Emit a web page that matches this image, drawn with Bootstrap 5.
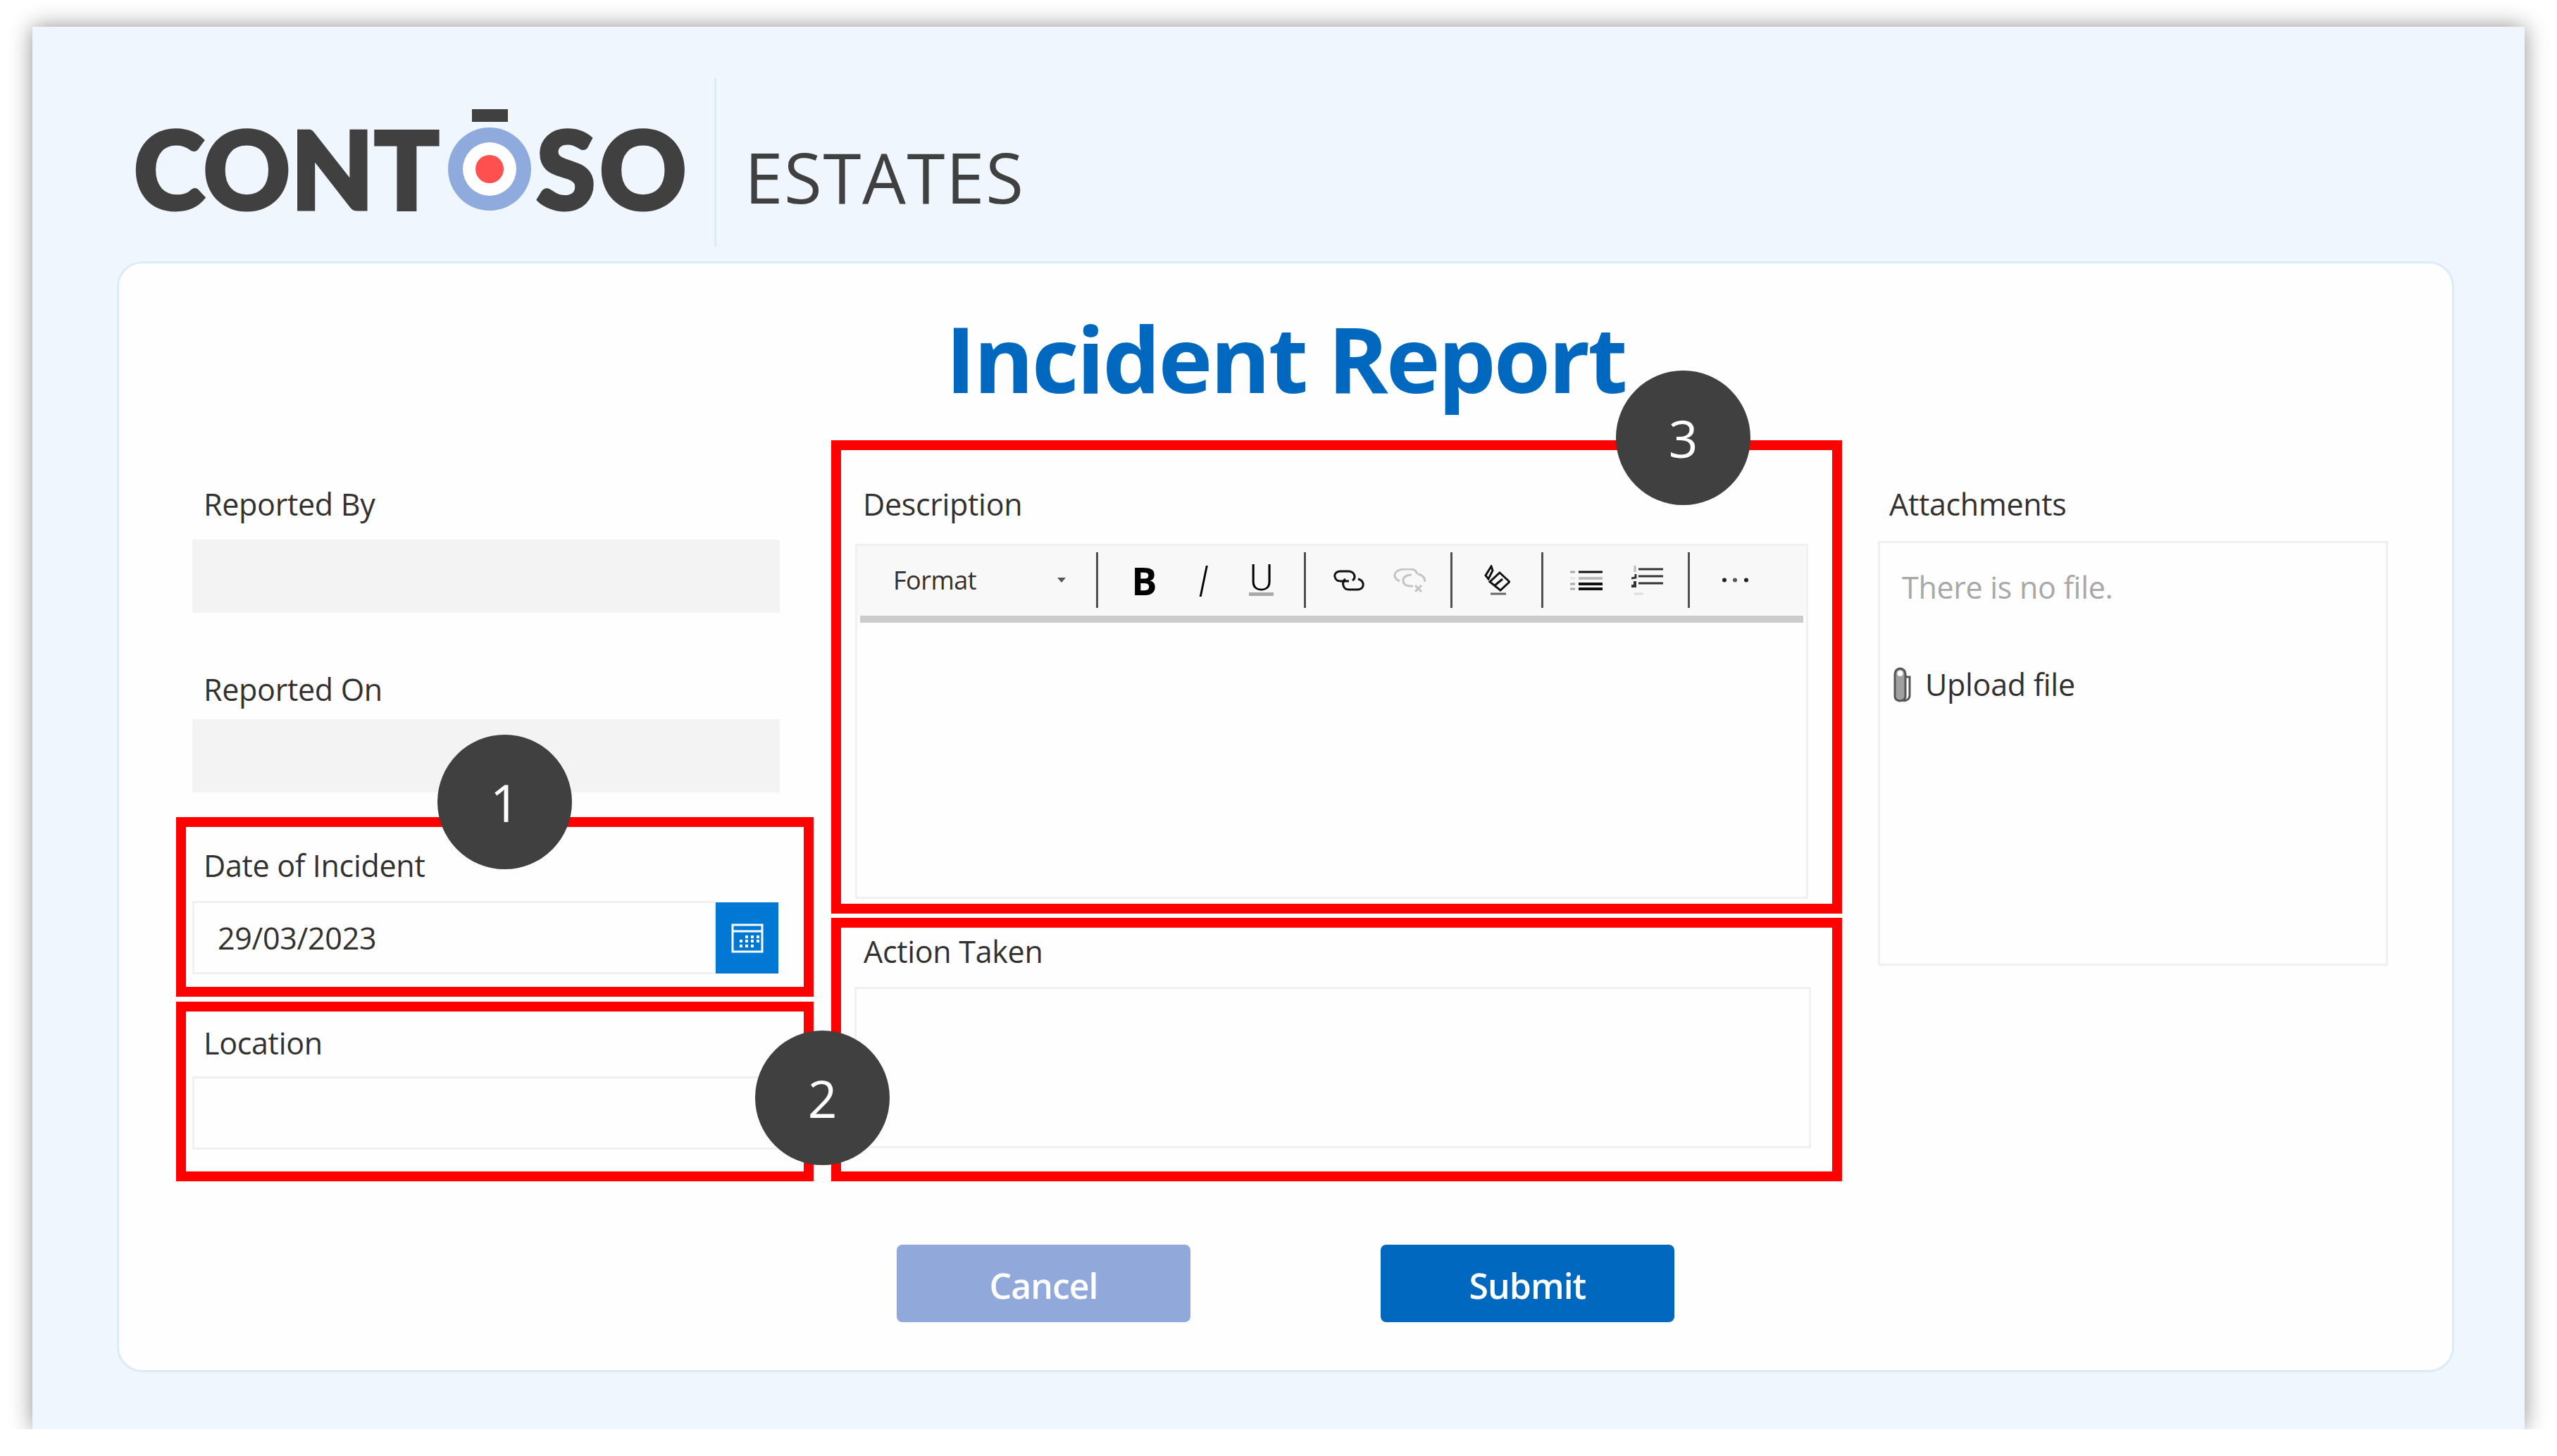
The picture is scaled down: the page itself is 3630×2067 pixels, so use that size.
<!doctype html>
<html lang="en">

<head>
  <meta charset="utf-8" />
  <title>Incident Report</title>
  <link href="https://cdn.jsdelivr.net/npm/bootstrap@5.3.0/dist/css/bootstrap.min.css" rel="stylesheet" />
  <style>
    body {
      background: #fff;
      font-family: "Open Sans", "Noto Sans", sans-serif;
      color: #323130;
      margin: 0;
    }

    .sheet {
      width: 3538px;
      height: 1991px;
      margin: 38px 0 0 46px;
      background: #eff6fe;
      box-shadow: 0 0 30px rgba(0, 0, 0, .44);
    }

    .brand-head {
      height: 333px;
    }

    .brand-mark {
      width: 968px;
      padding: 145px 0 0 144px;
      font-family: Lato, "Open Sans", sans-serif;
      font-weight: 900;
      font-size: 152px;
      line-height: 110px;
      letter-spacing: 1px;
      color: #404040;
      -webkit-text-stroke: 5px #404040;
    }

    .brand-mark svg {
      margin: -28px 7px 0 12px;
      flex: none;
    }

    .brand-tail {
      letter-spacing: 6px;
    }

    .brand-rule {
      width: 3px;
      height: 239px;
      margin-top: 73px;
      background: #dde9f7;
    }

    .brand-sub {
      margin: 158px 0 0 40px;
      font-size: 98px;
      line-height: 110px;
      letter-spacing: 1.6px;
      color: #404040;
    }

    .report-panel {
      width: 3318px;
      height: 1577px;
      margin-left: 120px;
      padding: 0 81px;
      background: #fefefe;
      border: 3px solid #dcebfa;
      border-radius: 36px;
    }

    .report-title {
      height: 251px;
      margin: 0;
      padding-top: 69px;
      text-align: center;
      font-family: "Open Sans", sans-serif;
      font-weight: 700;
      font-size: 130px;
      line-height: 130px;
      letter-spacing: -3px;
      color: #0069bf;
    }

    .col-left {
      width: 905px;
      padding-top: 66px;
    }

    .col-mid {
      width: 1435px;
      margin-left: 25px;
    }

    .col-right {
      width: 724px;
      margin-left: 51px;
      padding-top: 66px;
    }

    .field-label {
      display: block;
      margin: 0 0 25px;
      font-size: 43px;
      line-height: 50px;
      letter-spacing: -.3px;
      color: #323130;
    }

    .form-control.field-input {
      height: 104px;
      padding: 0 33px;
      font-size: 43px;
      letter-spacing: -.3px;
      color: #323130;
      background: #fefefe;
      border: 3px solid #f0f0f0;
      border-radius: 0;
    }

    .form-control.field-input:disabled {
      background: #f3f3f3;
      border-color: #f3f3f3;
    }

    .read-block {
      width: 834px;
      margin-left: 23px;
    }

    .read-block .field-label {
      margin-left: 16px;
    }

    .read-gap .field-label {
      margin-top: 84px;
      margin-bottom: 17px;
    }

    .mark-box {
      position: relative;
      border: 14px solid #f00;
    }

    .mark-date {
      height: 255px;
      margin-top: 35px;
      padding: 30px 34px 0 9px;
    }

    .mark-place {
      height: 255px;
      margin-top: 7px;
      padding: 20px 34px 0 9px;
    }

    .mark-desc {
      height: 672px;
      padding: 52px 34px 0 20px;
    }

    .mark-action {
      height: 374px;
      margin-top: 6px;
      padding: 9px 30px 0 19px;
    }

    .mark-box .field-label {
      margin-left: 16px;
    }

    .mark-desc .field-label {
      margin-left: 11px;
      margin-bottom: 31px;
    }

    .mark-action .field-label {
      margin-left: 13px;
    }

    .mark-date .field-label {
      margin-bottom: 25px;
    }

    .mark-place .field-label {
      margin-bottom: 22px;
    }

    .pick-btn {
      width: 89px;
      height: 101px;
      margin: 2px 2px 0 -91px;
      z-index: 5;
      display: flex;
      align-items: center;
      justify-content: center;
      padding: 0;
      background: #0078d4;
      border: 0;
      border-radius: 0;
    }

    .step-dot {
      position: absolute;
      z-index: 20;
      width: 191px;
      height: 191px;
      border-radius: 50%;
      background: #404040;
      color: #fff;
      font-size: 73px;
      display: flex;
      align-items: center;
      justify-content: center;
    }

    .step-one {
      left: 357px;
      top: -131px;
    }

    .step-two {
      left: 808px;
      top: 27px;
    }

    .step-three {
      left: 1100px;
      top: -113px;
    }

    .editor-frame {
      height: 504px;
      border: 3px solid #f0f0f0;
    }

    .editor-tools {
      height: 99px;
      background: #f8f8f8;
    }

    .editor-gutter {
      height: 10px;
      margin: 0 4px;
      background: #ccc;
    }

    .tool-group {
      height: 79px;
      margin-top: 9px;
      border-right: 3px solid #505050;
    }

    .tool-format {
      width: 342px;
      padding-left: 51px;
      font-size: 36px;
      letter-spacing: -.5px;
    }

    .tool-format i {
      margin-left: 115px;
      border: 6px solid transparent;
      border-top: 7px solid #555;
      border-bottom: 0;
    }

    .tool-btn {
      width: 83px;
      height: 79px;
      display: flex;
      align-items: center;
      justify-content: center;
      color: #000;
      line-height: 1;
    }

    .tool-bold {
      font-size: 54px;
      font-weight: 700;
    }

    .tool-slant {
      font-size: 60px;
      font-weight: 300;
      font-style: italic;
    }

    .tool-under span {
      display: block;
      padding-bottom: 0;
      font-family: Roboto, sans-serif;
      font-weight: 300;
      font-size: 52px;
      line-height: 40px;
      border-bottom: 5px solid #aaa;
    }

    .tool-wide {
      width: 86px;
    }

    .action-input.form-control {
      height: 229px;
      padding: 10px 30px;
      background: #fefefe;
      border: 3px solid #f0f0f0;
      border-radius: 0;
      resize: none;
    }

    .attach-box {
      height: 603px;
      margin-top: 27px;
      padding: 38px 29px 0 31px;
      border: 3px solid #f0f0f0;
    }

    .attach-none {
      margin: 0 0 88px;
      font-size: 43px;
      line-height: 50px;
      letter-spacing: -.3px;
      color: #a8a8a8;
    }

    .attach-link {
      margin-left: -12px;
      gap: 20px;
      font-size: 43px;
      line-height: 50px;
      letter-spacing: -.3px;
      color: #323130;
      text-decoration: none;
    }

    .form-actions {
      margin-top: 90px;
      padding-left: 1023px;
      gap: 270px;
    }

    .btn.act-btn {
      width: 417px;
      height: 110px;
      padding: 6px 0 0;
      border: 0;
      border-radius: 8px;
      font-size: 50px;
      font-weight: 600;
      letter-spacing: -1px;
      color: #fff;
    }

    .btn.act-cancel {
      background: #90a9da;
    }

    .btn.act-submit {
      background: #0069bf;
    }
  </style>
</head>

<body>
  <div class="sheet">
    <header class="brand-head d-flex">
      <div class="brand-mark d-flex">
        <span>CONT</span>
        <svg width="118" height="144" viewBox="0 0 118 144">
          <rect x="34" y="0" width="51" height="18" fill="#404040" />
          <circle cx="59" cy="85" r="59" fill="#8faadc" />
          <circle cx="59" cy="85" r="38" fill="#fff" />
          <circle cx="59" cy="85" r="20" fill="#ff5050" />
        </svg>
        <span class="brand-tail">SO</span>
      </div>
      <div class="brand-rule"></div>
      <div class="brand-sub">ESTATES</div>
    </header>

    <main class="report-panel">
      <h1 class="report-title">Incident Report</h1>
      <div class="d-flex">
        <div class="col-left">
          <div class="read-block">
            <label class="field-label">Reported By</label>
            <input class="form-control field-input" disabled />
          </div>
          <div class="read-block read-gap">
            <label class="field-label">Reported On</label>
            <input class="form-control field-input" disabled />
          </div>
          <div class="mark-box mark-date">
            <span class="step-dot step-one">1</span>
            <label class="field-label">Date of Incident</label>
            <div class="input-group">
              <input class="form-control field-input" value="29/03/2023" />
              <button class="pick-btn" type="button" aria-label="Pick date">
                <svg width="46" height="42" viewBox="0 0 46 42" fill="none" stroke="#fff" stroke-width="3">
                  <rect x="2" y="2" width="42" height="38" />
                  <path d="M2 11h42" />
                  <path d="M20 19h4M28 19h4M36 19h4M12 25h4M20 25h4M28 25h4M36 25h4M12 32h4M20 32h4M28 32h4" stroke-width="4" />
                </svg>
              </button>
            </div>
          </div>
          <div class="mark-box mark-place">
            <span class="step-dot step-two">2</span>
            <label class="field-label">Location</label>
            <input class="form-control field-input" />
          </div>
        </div>

        <div class="col-mid">
          <div class="mark-box mark-desc">
            <span class="step-dot step-three">3</span>
            <label class="field-label">Description</label>
            <div class="editor-frame">
              <div class="editor-tools d-flex">
                <div class="tool-group tool-format d-flex align-items-center">Format<i></i></div>
                <div class="tool-group d-flex ps-4" style="width:295px">
                  <span class="tool-btn tool-bold">B</span>
                  <span class="tool-btn tool-slant">I</span>
                  <span class="tool-btn tool-under"><span>U</span></span>
                </div>
                <div class="tool-group d-flex" style="width:208px;padding-left:18px">
                  <span class="tool-btn tool-wide">
                    <svg width="44" height="30" viewBox="0 0 44 30" fill="none" stroke="#111" stroke-width="3">
                      <path d="M27 15c3-2 4-5 2-9-2-3-5-4-8-4H10C4 2 1 6 2 10c1 4 4 6 8 6h12" />
                      <path d="M17 13c-3 2-4 5-3 9 1 4 4 6 8 6h12c6 0 9-4 8-9-1-3-3-5-7-6" />
                    </svg>
                  </span>
                  <span class="tool-btn tool-wide">
                    <svg width="46" height="34" viewBox="0 0 46 34" fill="none" stroke="#c4c4c4" stroke-width="3">
                      <path d="M9 18C2 15 0 9 4 5c3-3 7-4 12-4h8c6 0 9 3 10 7" />
                      <path d="M26 9c-7 0-12 3-12 8 0 5 4 8 9 8h5" />
                      <path d="M35 8c6 1 10 5 10 11" />
                      <path d="M31 24l9 9M40 24l-9 9" />
                    </svg>
                  </span>
                </div>
                <div class="tool-group d-flex justify-content-center" style="width:129px">
                  <span class="tool-btn">
                    <svg width="38" height="43" viewBox="0 0 38 43" fill="none" stroke="#111" stroke-width="3">
                      <path d="M11 2L3 15l4 5 6-12z" />
                      <path d="M23 11l14 13-13 12L9 24z" />
                      <path d="M15 30l12-10" />
                      <path d="M10 41h22" stroke="#666" />
                    </svg>
                  </span>
                </div>
                <div class="tool-group d-flex" style="width:208px;padding-left:18px">
                  <span class="tool-btn" style="width:86px">
                    <svg width="46" height="28" viewBox="0 0 46 28" stroke="#111" stroke-width="3">
                      <path d="M12 2h34" />
                      <path d="M12 11h34" stroke="#bbb" stroke-width="4" />
                      <path d="M12 19h34M12 26h34" stroke-width="4" />
                      <path d="M0 2h7M0 19h7M0 26h7" stroke="#aaa" />
                      <path d="M0 11h7" stroke="#e4e4e4" />
                    </svg>
                  </span>
                  <span class="tool-btn" style="width:86px">
                    <svg width="45" height="42" viewBox="0 0 45 42" stroke="#333" stroke-width="3" fill="none">
                      <path d="M10 5h35M10 15h35M10 25h35" />
                      <path d="M5 0v9" stroke="#bbb" />
                      <path d="M6 12v5l-6 1" />
                      <path d="M5 22v7H0" stroke-width="4" />
                      <path d="M4 40h13" stroke="#ddd" />
                    </svg>
                  </span>
                </div>
                <div class="d-flex justify-content-center align-items-center" style="width:130px;height:79px;margin-top:9px">
                  <svg width="38" height="7" viewBox="0 0 38 7" fill="#222">
                    <circle cx="3" cy="3.5" r="3" />
                    <circle cx="18" cy="3.5" r="3" fill="#555" />
                    <circle cx="34" cy="3.5" r="3" />
                  </svg>
                </div>
              </div>
              <div class="editor-gutter"></div>
            </div>
          </div>
          <div class="mark-box mark-action">
            <label class="field-label">Action Taken</label>
            <textarea class="form-control action-input"></textarea>
          </div>
        </div>

        <div class="col-right">
          <label class="field-label mb-0" style="margin-left:16px">Attachments</label>
          <div class="attach-box">
            <p class="attach-none">There is no file.</p>
            <a class="attach-link d-flex align-items-center" href="#">
              <svg width="25" height="50" viewBox="0 0 25 50" fill="none" stroke="#555" stroke-width="3">
                <path d="M2 10a7.500 8 0 0 1 15 0v32a7.500 6 0 0 1-15 0z" fill="#a0a0a0" />
                <circle cx="9.500" cy="9" r="4" fill="#fff" stroke="none" />
                <path d="M17 14h6v26c0 5-4 8-9 8" />
              </svg>
              Upload file
            </a>
          </div>
        </div>
      </div>

      <div class="form-actions d-flex">
        <button class="btn act-btn act-cancel" type="button">Cancel</button>
        <button class="btn act-btn act-submit" type="button">Submit</button>
      </div>
    </main>
  </div>

  <script src="https://cdn.jsdelivr.net/npm/bootstrap@5.3.0/dist/js/bootstrap.bundle.min.js"></script>
</body>

</html>
